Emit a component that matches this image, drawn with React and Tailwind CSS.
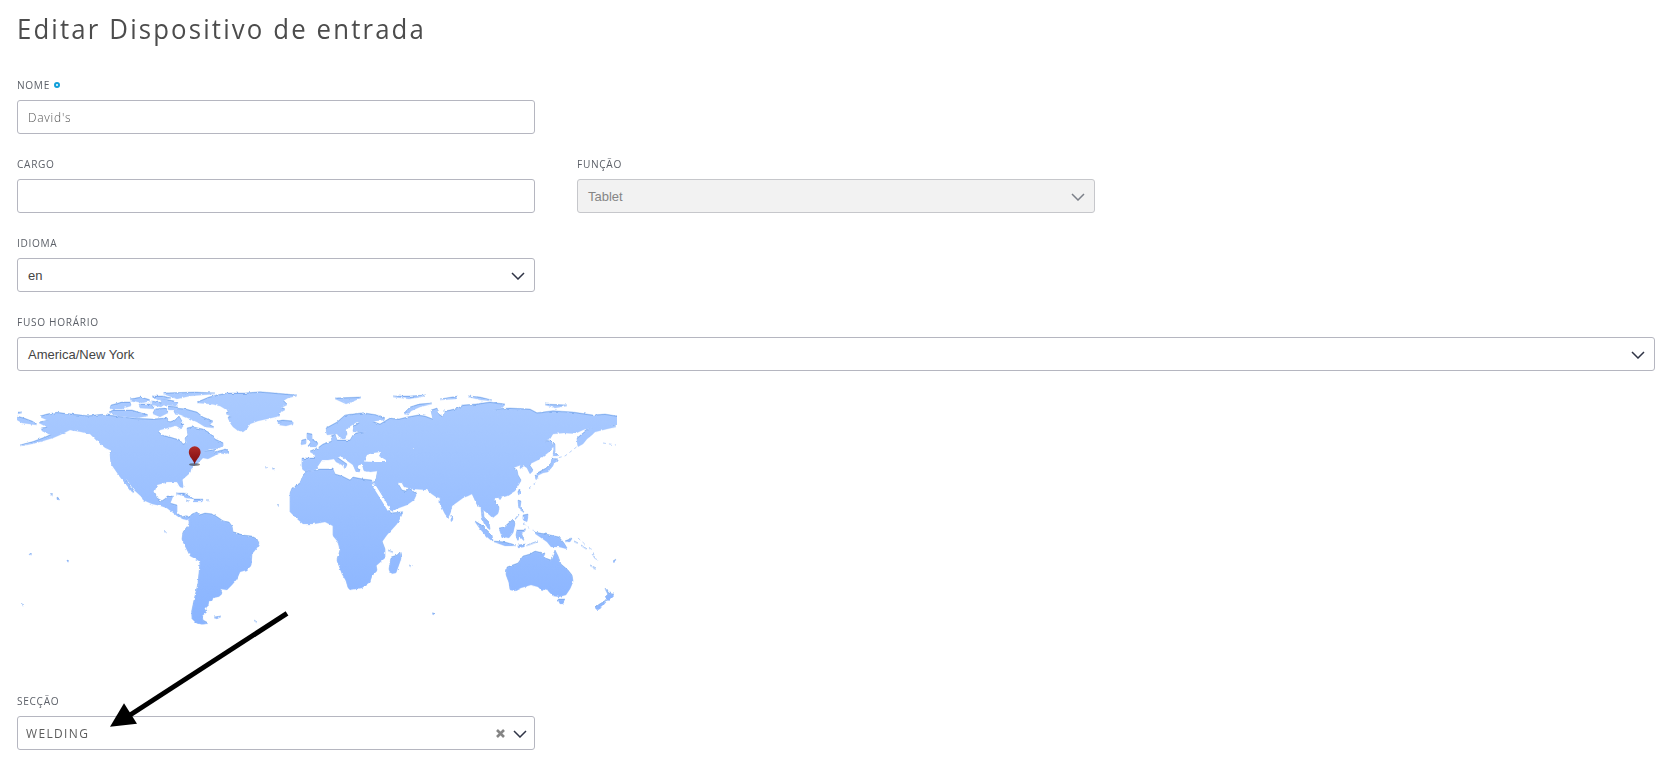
const LAND = [
  // North and Central America
  'M40 416 47 414 57 412.3 65 413.3 88 415.7 102 414.3 117 416 135 418.3 153 419 166 418 170 421.7 175 420 179 416 182 421 180 424 175 425 168 427 160 429 158 431 162 435 170 437 180 440 183 444 186 443 185 438 188 435 187 428 192 426.7 203 429 210 433 215 439 223 442.7 223 445 218 447.7 210 448 203 451 211 450 215 449 214 452 226 449 229 452 224 453 219 452 214 455 208 458 203 457 200 460 195 465 191 468 190 472 182 479 183 487 180 486 177 481 167 481 164 482 157 484 154 491.7 157 498 162 500.7 166 498 167 496 172.7 496 170 503 177 505 177 513 182 516.7 187 515.7 190 518 186.7 519 182.7 518 177 515 171.7 510.7 166.7 507 160 504.7 152 503 143 499 141.7 496 134 489 127 479 126 480 134 492 132 491 120 476 111 463 110 452 112 450 105 446.7 97 440 90 433 80 430.7 70 429 66 431 60 434 53 437 43 440 33 442.7 20 445 33 441.5 45 437 52 434 47 432.7 42 430 41 428 48 426.7 39 422 49 420Z',
  // South America
  'M189 517.3 192 514 197 512 199 515 205 513 213 514 219 518 223 520.7 229 522 232 526 233 531.7 243 535 251.7 536 257 539 259 543 257 547 252 553 251 565 247 569 240 571 237 578 232 584 227 589 220 588 222 593 219 595.7 213 597 212 600 209 600 208 605 205 608 207 611 202 615 203 620 208 622.7 202 623.5 196 622 192 618 191.7 611 194 600 198 583 200 563 199 560 190 555 187 549 182 539 183 532 189 524Z',
  // Greenland
  'M197 402 209 397 217 395 227 393 245 393 260 391.7 275 393 297 395 288 397 283 400 287 404 281 407 285 409 278 413 280 415 267 418 258 420 250 423 247 428 243 431 237 429 233 426 230 421.7 228 417 232 416 226 413 229 411 225 408 220 405 210 403Z',
  // Africa
  'M307 470.7 320 469 333 469 335 474 342 476 350 480 353 477 363 479 371.7 480 373 485 378 491 382 499 386 504 389 510 391 513 402.7 511.7 401 516 397 523 387 534 382 541 385 549 385 557 376 565 377 570 372 575 370 581 362 587 350 589 348 587 346 580 342 573 337 560 340 550 338 541 333 535 333 525 325 521 314 523 303 523 296 517 290 511 290 499 290 493 292 488 300 483 303 475Z',
  // Europe and Asia
  'M302 458 315 458 315 454 310 451 318 447.7 323 444 332 441 331 436 335 434 337 440 350 440 353 435 356 433 366 431 353 431 354 426 360 422 357 421 349 426 346 430 347 434 345 438 341 438 337 433 327 434 326 428 337 422 345 415 363 412.7 378 415 385 419 376 420 372 421 380 424 390 418 399 419 407 417 418 415 425 416 433 419 431 410 437 408 439 414 443 417 444 411 450 410 458 408 463 405 476 404 490 402 505 404 502 407 493 409 510 408 530 409 537 412.7 553 410.7 573 412 593 415 605 414 617 416 617 424 610 424 616 426 607 428 595 431 592 434 587 438 583 443 578 445.7 577 438 583 433 588 429 591.7 427 583 429 575 432.7 564 432 553 433 550 438 544 440 551 441 553 446 549 451 540 458 532 462 529 464 533 470 530 473 527 467 524 465 520 468 521 464 513 467 517 470 518 475 521 480 515 490 507 495 500 497 495 497 494 500 499 507 498 512.7 492.7 517 488 512.7 483 509 484 517 489 522 490 529 485 525 482 517 481 507 477 504 472 493 468 495 463 497 452 505 450 513 448 517 445 513 440 503 440 497 436 496 431.7 493 427 489 413 488 404 486 402 482 397 481.7 402 490 406 491 409 488 416.7 493 414 499 407 504 391 510 386 501 377 487 373 482 376 479 377.7 470 370 471 364 470 362 463 360 464 357 467 360 471 356 471 353 464 346 459 341 455 337 457 347 464 345 468 342 464 336 461 334 458 328 459 322 459 318 465 314 470 304 470 302 466Z',
  // Australia and Tasmania
  'M507 567 518 563 523 556 530 554 535 551 539 552 545 553 543 557 551 560 553 555 555 550 558 556 561 564 568 570 572 575 573 581 570 588 566 594 559 596 553 595 549 591 546 587 542 590 538 586 531 584 521 587 515 590 510 589 509 582 506 574Z',
  'M558 599 565 599 563 603 560 603Z',
  // New Zealand
  'M605 588 609 593 614 594 608 600 605 597 608 594Z M607 600 602 606 597 609 595 607 601 603Z',
  // New Guinea and Indonesia
  'M534 532 540 533 546 534 559 537 564 543 567 548 559 546 551 546 547 541Z',
  'M499 528 504 527 512 520 515 523 513 532 509 537 502 536Z',
  'M475 521 483 526 492 535 493 541 487 536 480 528Z M494 541 505 542 516 545 505 545Z',
  'M517 530 526 530 521 532 524 540 519 535 518 541 516 535Z M527 545 538 541 530 544Z M518 545 526 544 524 546 518 547Z',
  // Philippines, Taiwan and Japan
  'M518 500 521 501 520 507 524 512 519 508Z M523 515 528 514 527 521 523 519Z M518 491 521 489 520 493 518 494Z M515 519 519 514 516 518Z M498 496 502 496 500 499Z',
  'M553 442 555 444 555 452 558 455 553 455 554 449Z M552 458 558 459 554 461 553 465 548 471 543 472 537 475 537 473 546 468 551 463Z M535 475 538 476 536 479Z',
  // Madagascar and Sri Lanka
  'M400 552 401 558 396 572 391 573 389 569 391 557 397 555Z',
  'M451 515 453 519 451 521Z',
  // Great Britain, Ireland and Iceland
  'M307 433 312 434 312 439 318 443 316 446 308 446 311 442 307 438Z M302 440 306 439 306 443 301 444Z',
  'M277 421 283 420 293 421 293 423 286 425 279 424Z',
  // Caribbean
  'M176 493 184 493 194 498 186 497 180 494Z M194 499 203 499 202 501 194 501Z M186 500 189 501Z M206 500 209 500Z',
  // Canadian Arctic
  'M111 405 122 402 130 402 131 405 121 408 110 408Z M113 410 132 410 148 415 137 417 118 415 109 412Z M130 399 141 397 151 400 142 402Z M139 404 151 404 154 408 140 407Z M152 396 163 396 171 398 158 399Z M163 393 195 392 215 393 190 395 177 398Z M152 401 165 403 161 406 152 404Z M160 398 178 402 176 405 163 404Z M155 409 165 408 168 412 160 416 153 413Z',
  'M175 408 186 409 197 412 203 417 213 421 209 424 214 427 205 426 197 421 190 418 181 414 174 412Z M169 406 178 407 176 409 168 409Z M175 424 184 424 181 428Z',
  // Svalbard, Franz Josef Land, Novaya Zemlya and Arctic islands
  'M335 398 361 397 354 400 346 403Z M393 396 410 396 426 395 409 398Z M404 413 410 407 419 404 432 403 420 406 411 410 408 414Z',
  'M468 396 480 397 492 400 481 399Z M545 404 567 405 555 407Z M440 399 458 396 456 398Z',
  // Islands cut by the left and right margins
  'M17 416 24 418 32 421 37 424 22 422 17 419Z M18 412 22 412 18 413Z M613 561 616 559 614 562Z',
  // Melanesia and small Atlantic, Pacific and Indian Ocean islands
  'M565 541 572 538 570 541Z M574 541 578 543Z M581 545 587 549Z M592 553 595 558Z M590 565 596 568 592 566Z M57 497 60 499 57 499Z M50 494 53 495Z M164 531 167 532Z M214 617 221 616 217 618Z M254 620 257 622Z M432 613 434 613 434 614Z M29 553 32 554 29 554Z M67 560 69 561 67 561Z M22 604 24 605Z M409 565 411 566Z M413 564 414 565Z M388 550 393 552Z M265 467 268 467Z M272 468 275 469Z M277 504 279 505Z',
].join(' ');

const WATER =
  'M364 461.5 367 455 373 453 381 452 379 456 386 460 386 462 375 462Z M413 448 414 447 414 449Z';

function WorldMap() {
  return (
    <svg className="block h-[248px] w-[600px]" viewBox="17 386 600 248">
      <defs>
        <linearGradient id="land" x1="0" y1="386" x2="0" y2="634" gradientUnits="userSpaceOnUse">
          <stop offset="0" stopColor="#abcbff" />
          <stop offset="1" stopColor="#88b3ff" />
        </linearGradient>
        <linearGradient id="pin" x1="0" y1="0" x2="0" y2="1">
          <stop offset="0" stopColor="#b02c28" />
          <stop offset="0.45" stopColor="#971c1c" />
          <stop offset="1" stopColor="#7c0c0e" />
        </linearGradient>
        <filter id="coast" x="0" y="386" width="640" height="248" filterUnits="userSpaceOnUse">
          <feTurbulence type="fractalNoise" baseFrequency="0.25" numOctaves="2" seed="4" />
          <feDisplacementMap in="SourceGraphic" scale="2.6" xChannelSelector="R" yChannelSelector="G" />
          <feGaussianBlur stdDeviation="0.3" />
        </filter>
      </defs>
      <g filter="url(#coast)">
        <path d={LAND} fill="#7aa9ee" stroke="#7aa9ee" strokeWidth="0.4" />
        <path d={LAND} fill="url(#land)" stroke="#b5d0ff" strokeWidth="0.3" transform="translate(0 1)" />
        <path d={WATER} fill="#fff" />
        <path d="M373 484 378 492 383 500 389 510" fill="none" stroke="#fff" strokeWidth="3" />
        <path
          d="M538 477 534 484 529 488M553 459 565 456 574 449 579 445M603 443 616 445M578 538 587 546M590 547 597 561M523 523 535 532"
          fill="none"
          stroke="#b9d2fb"
          strokeWidth="1"
          strokeDasharray="3 3"
        />
      </g>
      <ellipse cx="194.5" cy="464.6" rx="5.5" ry="1.4" fill="#333" opacity="0.6" />
      <path
        d="M194.6 464.5C193.6 460 188.8 456.8 188.8 452A5.9 5.8 0 0 1 200.6 452C200.6 456.8 195.6 460 194.6 464.5Z"
        fill="url(#pin)"
      />
    </svg>
  );
}

function Chevron({ className = 'text-[#2f3446]' }) {
  return (
    <svg className={`h-[8px] w-[14px] ${className}`} viewBox="0 0 14 8" fill="none" stroke="currentColor" strokeWidth="1.5">
      <path d="M1 1 7 7 13 1" />
    </svg>
  );
}

function Field({ label, required, className = '', children }) {
  return (
    <div className={className}>
      <div className="flex h-[22px] items-center text-[11px] leading-[14px] tracking-[0.74px] text-[#5c6068]">
        <span className="origin-left scale-x-[0.92]">{label}</span>
        {required && <span className="ml-[1px] size-[6px] rounded-full border-2 border-[#109fda]" />}
      </div>
      <div className="mt-[4px]">{children}</div>
    </div>
  );
}

const box = 'flex h-[34px] items-center rounded-[3px] border';

function Select({ value, disabled }) {
  return (
    <div
      className={`${box} justify-between pt-px pr-[9px] pl-[10px] font-['Liberation_Sans'] text-[13px] ${
        disabled ? 'border-[#c6c7cb] bg-[#f2f2f2] text-[#858585]' : 'border-[#b5b6c0] bg-white text-[#444]'
      }`}
    >
      <span>{value}</span>
      <Chevron className={disabled ? 'text-[#7c8089]' : 'text-[#2f3446]'} />
    </div>
  );
}

export default function App() {
  return (
    <main className="relative h-[762px] w-[1674px] overflow-hidden bg-white pr-[19px] pl-[17px] font-['Open_Sans',sans-serif]">
      <h1 className="h-[74px] origin-left scale-x-[0.92] pt-[8px] text-[28px] leading-[40px] tracking-[2.33px] text-[#4c4c4c]">
        Editar Dispositivo de entrada
      </h1>
      <div className="grid grid-cols-3 gap-x-[42px] gap-y-[19px]">
        <Field label="NOME" required className="col-span-3 w-[518px]">
          <div className={`${box} border-[#b5b6c0] pt-px pl-[10px] text-[13px] font-light tracking-[0.83px] text-[#555]`}>
            <span className="origin-left scale-x-[0.92]">David's</span>
          </div>
        </Field>
        <Field label="CARGO">
          <div className={`${box} border-[#b5b6c0]`} />
        </Field>
        <Field label="FUNÇÃO">
          <Select value="Tablet" disabled />
        </Field>
        <Field label="IDIOMA" className="col-start-1">
          <Select value="en" />
        </Field>
        <Field label="FUSO HORÁRIO" className="col-span-3">
          <Select value="America/New York" />
        </Field>
      </div>
      <div className="h-[319px] pt-[15px]">
        <WorldMap />
      </div>
      <Field label="SECÇÃO" className="w-[518px]">
        <div className={`${box} justify-between border-[#b5b6c0] pt-px pr-[7px] pl-[8px] text-[13px] tracking-[1.49px] text-[#5c5c5c]`}>
          <span className="origin-left scale-x-[0.92]">WELDING</span>
          <span className="flex items-center gap-[8px]">
            <svg className="size-[9px]" viewBox="0 0 9 9" stroke="#858585" strokeWidth="2.6">
              <path d="M1 1 8 8M8 1 1 8" />
            </svg>
            <Chevron />
          </span>
        </div>
      </Field>
      <svg className="absolute top-[608px] left-[106px] h-[124px] w-[188px]" viewBox="106 608 188 124">
        <path d="M287 613.3 127 717" stroke="#000" strokeWidth="5" />
        <path d="M110 726.7 124 703.2 137 723.8Z" />
      </svg>
    </main>
  );
}
